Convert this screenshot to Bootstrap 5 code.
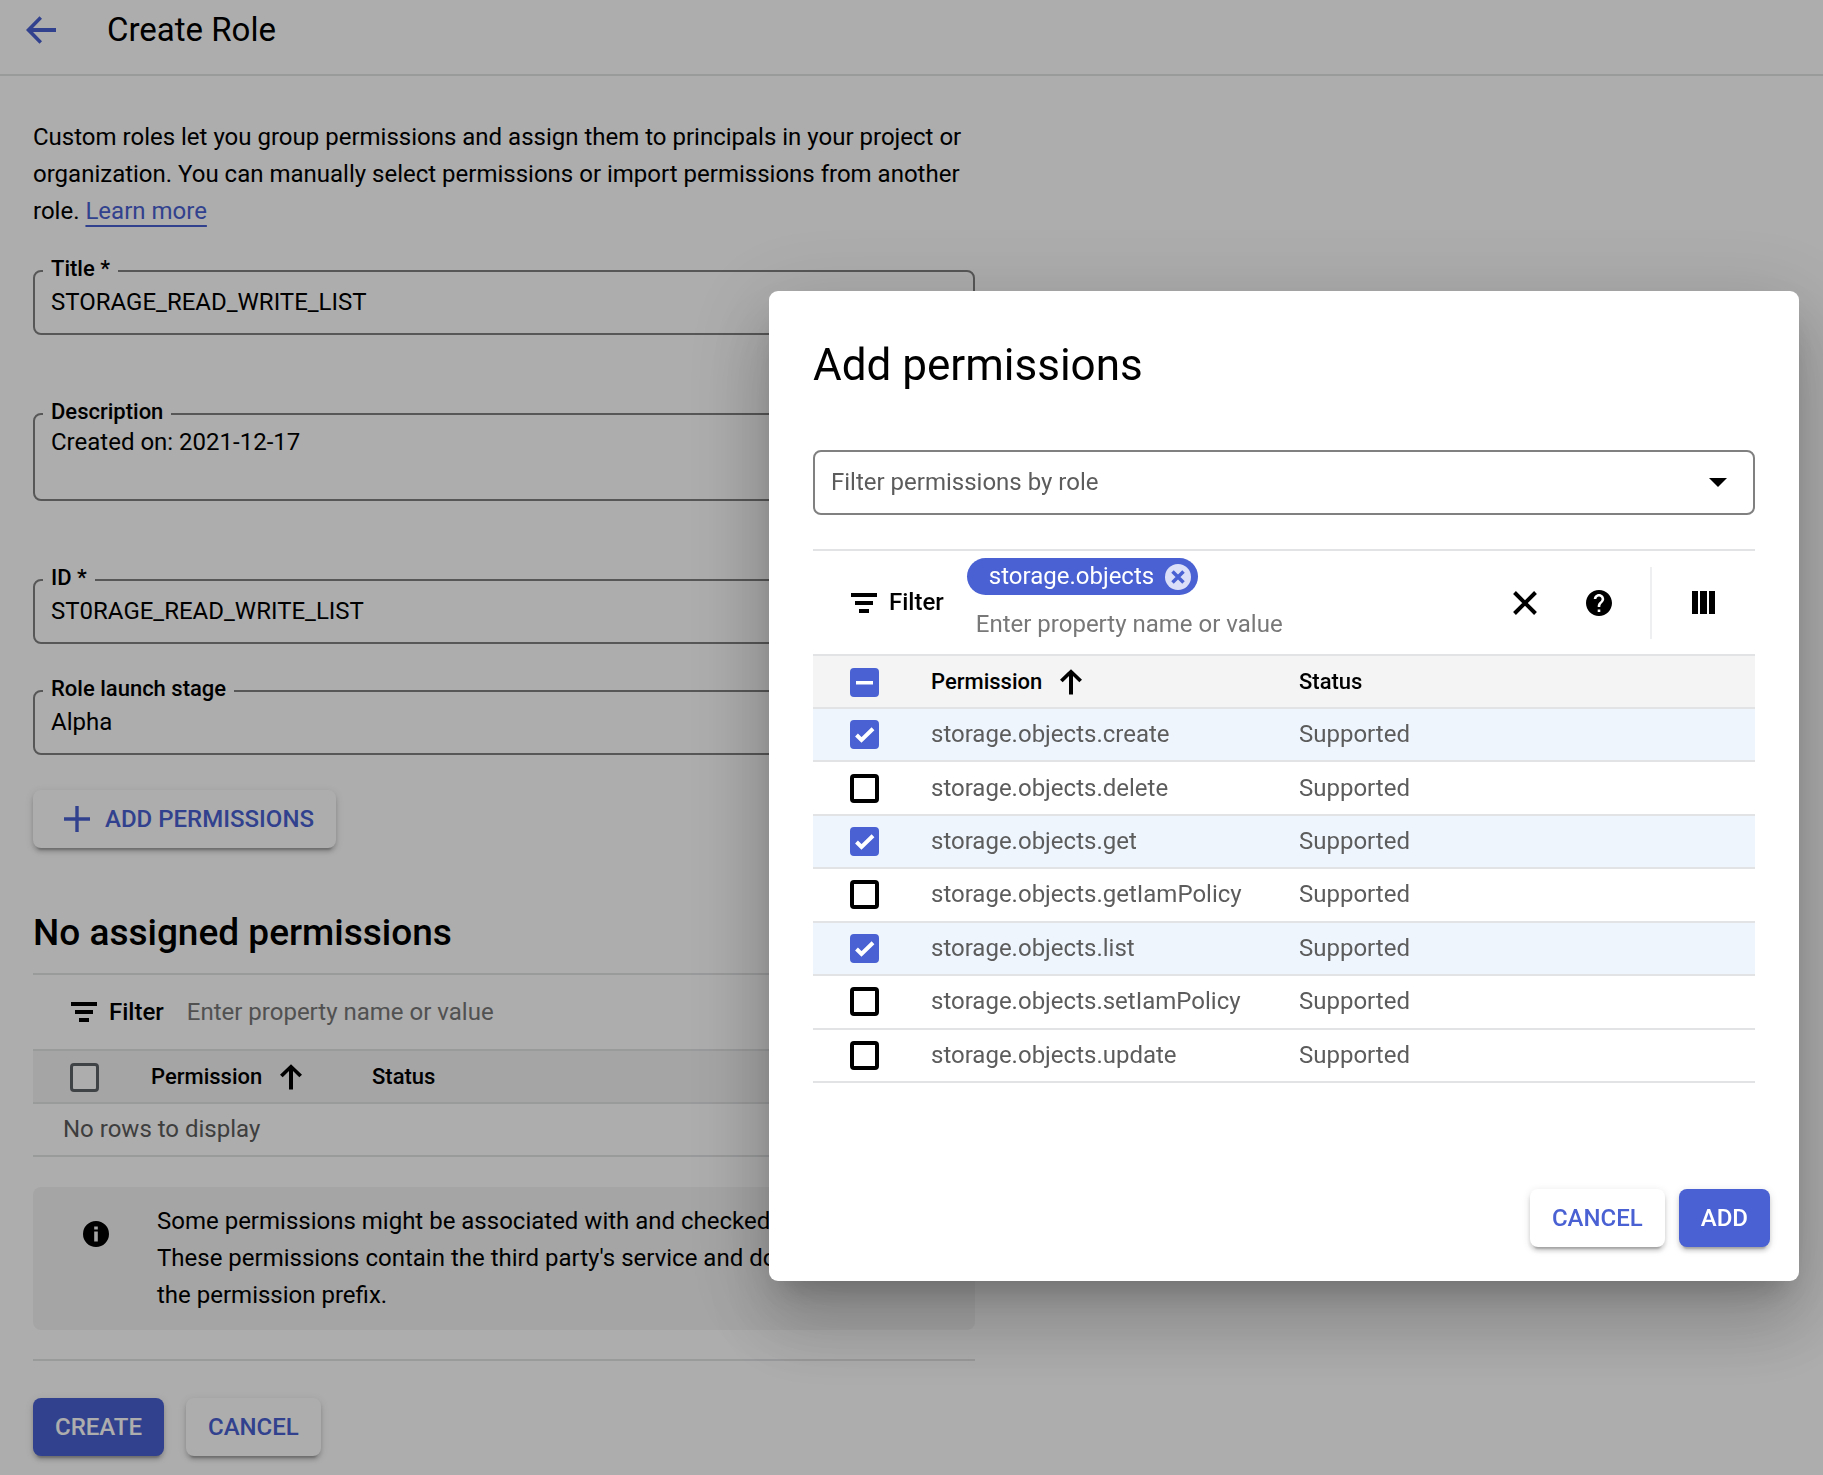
<!DOCTYPE html>
<html lang="en">
<head>
<meta charset="utf-8">
<meta name="viewport" content="width=device-width, initial-scale=1">
<title>Create Role</title>
<link href="https://cdn.jsdelivr.net/npm/bootstrap@5.3.0/dist/css/bootstrap.min.css" rel="stylesheet">
<style>
  :root { --accent: #4961d2; --line: #e2e3e4; --outline: #808080; --soft: #f4f4f4; --picked: #eef5fd; --dim: #5c5c5c; }
  body { font-family: Roboto, "Liberation Sans", sans-serif; font-size: 24px; line-height: 37px; color: #000; background: #fff; }
  svg { display: block; flex: none; fill: currentColor; }

  .page-head { height: 76px; padding: 0 24px 15px; border-bottom: 2px solid var(--line); }
  .page-head h1 { font-size: 33px; line-height: 40px; font-weight: 400; margin-left: 49px; }
  .back-link, .text-link { color: var(--accent); }
  .text-link { text-decoration: underline 2px; text-underline-offset: 6px; text-decoration-skip-ink: none; }
  .role-form { max-width: 1008px; padding: 43px 33px 18px; }

  .outlined { position: relative; }
  .outlined label { position: absolute; top: -20px; left: 10px; padding: 0 8px; background: #fff; font-size: 22px; font-weight: 500; }
  .outlined .form-control, .outlined .form-select { height: 65px; padding: 0 16px 1px; border: 2px solid var(--outline); border-radius: 8px; font-size: 24px; line-height: 37px; color: #000; background-color: transparent; }
  .outlined .form-select { background-image: url("data:image/svg+xml,%3Csvg xmlns='http://www.w3.org/2000/svg' viewBox='0 0 18 9'%3E%3Cpath d='M0 0h18L9 9z'/%3E%3C/svg%3E"); background-size: 18px 9px; background-position: right 26px center; }
  .outlined textarea.form-control { height: 88px; padding-top: 9px; resize: none; overflow: hidden; }
  .outlined .form-select.muted { color: var(--dim); }
  .gap-field { margin-bottom: 78px; }
  .gap-tight { margin-bottom: 46px; }
  .gap-last { margin-bottom: 35px; }

  .act { height: 58px; padding: 0 22px; border: 0; border-radius: 8px; font-size: 24px; font-weight: 500; line-height: 37px; color: var(--accent); background: #fff;
    box-shadow: 0 6px 2px -4px rgba(0,0,0,.2), 0 4px 4px rgba(0,0,0,.14), 0 2px 9px rgba(0,0,0,.12); }
  .act:hover, .act.solid { color: #fff; background: var(--accent); }
  .act.with-icon { padding-left: 28px; gap: 12px; }

  .section-title { font-size: 37px; line-height: 44px; font-weight: 500; margin: 63px 0 18px; }
  .filter-bar { border-top: 2px solid var(--line); height: 76px; padding-left: 38px; }
  .filter-bar label { font-weight: 500; }
  .filter-bar input { border: 0; padding: 0; outline: 0; width: 320px; background: transparent; height: 37px; }
  .filter-bar > input { margin-left: 23px; }
  .filter-bar input::placeholder { color: #787878; opacity: 1; }

  .perm-table { --bs-table-bg: transparent; --bs-table-color: var(--dim); margin: 0; table-layout: fixed; border-color: var(--line); }
  .perm-table > :not(caption) > * > * { padding: 0; height: 53px; border-bottom: 2px solid var(--line); vertical-align: middle; line-height: 37px; color: var(--dim); }
  .perm-table > thead > tr > th { background: var(--soft); border-top: 2px solid var(--line); color: #000; font-size: 22px; font-weight: 500; }
  .perm-table > tbody > tr.picked > td { background: var(--picked); }
  .perm-table .col-tick { width: 118px; }
  .perm-table .col-name { width: 368px; }
  .tick.form-check-input { display: block; float: none; width: 29px; height: 29px; margin: 0 0 0 37px; border: 4px solid #000; border-radius: 4px; }
  thead .tick.form-check-input { margin-top: 2px; }
  .tick[type=checkbox]:checked, .tick[type=checkbox]:indeterminate { background-color: var(--accent); border-color: var(--accent); background-size: 21px 21px; }
  .tick[type=checkbox]:checked { background-image: url("data:image/svg+xml,%3Csvg xmlns='http://www.w3.org/2000/svg' viewBox='0 0 21 21'%3E%3Cpath fill='none' stroke='%23fff' stroke-width='4' d='M2.500 11l5 5L19 4.800'/%3E%3C/svg%3E"); }
  .tick.form-check-input[type=checkbox]:indeterminate { background-color: var(--accent); border-color: var(--accent); background-image: url("data:image/svg+xml,%3Csvg xmlns='http://www.w3.org/2000/svg' viewBox='0 0 21 21'%3E%3Cpath fill='%23fff' d='M2 9h17v3.400H2z'/%3E%3C/svg%3E"); }
  .empty-table .col-name { width: 221px; }
  .empty-table .tick.form-check-input { border: 3px solid #5f6368; }
  .perm-table > tbody > tr > td.no-rows { padding-left: 30px; }

  .note { background: var(--soft); border-radius: 8px; padding: 16px 16px 16px 50px; margin: 30px 0 29px; }
  .note svg { margin-top: 18px; }
  .note p { margin: 0 0 0 48px; }
  .form-actions { border-top: 2px solid var(--line); padding-top: 37px; gap: 22px; }

  .shade { background: rgba(0,0,0,.32); opacity: 1; }
  .perm-dialog { max-width: 1030px; margin: 291px 24px 24px auto; }
  .perm-dialog .modal-content { border: 0; border-radius: 9px; padding: 0 44px; color: #000;
    box-shadow: 0 20px 28px -13px rgba(0,0,0,.2), 0 44px 70px 6px rgba(0,0,0,.14), 0 17px 85px 15px rgba(0,0,0,.12); }
  .perm-dialog .modal-title { font-size: 44px; line-height: 56px; font-weight: 400; margin: 46px 0 57px; }
  .perm-dialog .filter-bar { height: 105px; margin-top: 34px; padding: 0 40px 0 38px; }
  .chip { height: 37px; padding: 0 7px 0 22px; border-radius: 19px; background: var(--accent); color: #fff; }
  .chip button, .tool { border: 0; padding: 0; background: none; color: inherit; }
  .chip button { color: #dbe0f8; margin-left: 11px; }
  .chip-stack { margin-left: 23px; padding-top: 7px; }
  .chip-stack input { display: block; margin: 11px 0 0 9px; }
  .bar-rule { width: 2px; height: 72px; background: #eeeff0; margin: 0 40px 0 38px; }
  .dialog-table { height: 429px; }
  .perm-dialog .modal-footer { border: 0; padding: 0; margin: 106px -15px 34px 0; gap: 14px; }
  .perm-dialog .modal-footer > * { margin: 0; }
</style>
<script src="https://cdn.jsdelivr.net/npm/bootstrap@5.3.0/dist/js/bootstrap.bundle.min.js"></script>
</head>
<body>

<header class="page-head d-flex align-items-center">
  <a class="back-link" href="#" aria-label="Back"><svg width="34" height="30" viewBox="0 0 34 30"><path d="M32 13H9L18 3.700 15.500 1.200 2 15l13.500 13.800 2.500-2.500L9 17H32z"/></svg></a>
  <h1 class="mb-0">Create Role</h1>
</header>

<main class="role-form">
  <p class="mb-0 pb-1">Custom roles let you group permissions and assign them to principals in your project or organization. You can manually select permissions or import permissions from another role. <a class="text-link" href="#">Learn more</a></p>
  <form class="pt-4 mt-2">
    <div class="outlined gap-field mt-1">
      <label for="role-title">Title *</label>
      <input class="form-control" id="role-title" type="text" value="STORAGE_READ_WRITE_LIST">
    </div>
    <div class="outlined gap-field">
      <label for="role-desc">Description</label>
      <textarea class="form-control d-block" id="role-desc">Created on: 2021-12-17</textarea>
    </div>
    <div class="outlined gap-tight">
      <label for="role-id">ID *</label>
      <input class="form-control" id="role-id" type="text" value="ST0RAGE_READ_WRITE_LIST">
    </div>
    <div class="outlined gap-last">
      <label for="role-stage">Role launch stage</label>
      <select class="form-select" id="role-stage"><option>Alpha</option></select>
    </div>
    <button class="btn act with-icon d-flex align-items-center" type="button">
      <svg width="32" height="32" viewBox="0 0 32 32"><path d="M14.300 3h3.400v11.300H29v3.400H17.700V29h-3.400V17.700H3v-3.400h11.300z"/></svg>ADD PERMISSIONS
    </button>

    <h2 class="section-title">No assigned permissions</h2>
    <div class="filter-bar d-flex align-items-center">
      <svg width="26" height="20" viewBox="0 0 26 20"><path d="M0 0h26v4H0zM4 8h18v4H4zM8 16h10v4H8z"/></svg>
      <label class="ms-2 ps-1" for="page-filter">Filter</label>
      <input id="page-filter" type="text" placeholder="Enter property name or value">
    </div>
    <table class="table perm-table empty-table">
      <thead>
        <tr>
          <th class="col-tick"><input class="form-check-input tick" type="checkbox" aria-label="Select all assigned permissions"></th>
          <th class="col-name"><span class="d-flex align-items-center">Permission<svg class="ms-3" width="26" height="26" viewBox="0 0 26 26"><path d="M11 25.500V7L4.700 13.300 2 10.700 13 .2l11 10.500-2.700 2.600L15 7v18.500z"/></svg></span></th>
          <th>Status</th>
        </tr>
      </thead>
      <tbody><tr><td class="no-rows" colspan="3">No rows to display</td></tr></tbody>
    </table>

    <div class="note d-flex align-items-start">
      <svg width="26" height="26" viewBox="0 0 26 26"><path fill-rule="evenodd" d="M13 0a13 13 0 1 1 0 26 13 13 0 0 1 0-26zM11.200 5.500v3h3.600v-3zM11.200 10.500v10h3.600v-10z"/></svg>
      <p>Some permissions might be associated with and checked by third parties. These permissions contain the third party's service and domain name in the permission prefix.</p>
    </div>

    <div class="form-actions d-flex">
      <button class="btn act solid" type="submit">CREATE</button>
      <button class="btn act" type="button">CANCEL</button>
    </div>
  </form>
</main>

<div class="modal-backdrop shade"></div>
<div class="modal d-block" role="dialog" aria-modal="true" aria-labelledby="dialog-title">
  <div class="modal-dialog perm-dialog">
    <div class="modal-content">
      <h2 class="modal-title" id="dialog-title">Add permissions</h2>
      <div class="outlined">
        <select class="form-select muted" aria-label="Filter permissions by role"><option>Filter permissions by role</option></select>
      </div>

      <div class="filter-bar d-flex align-items-center">
        <svg width="26" height="20" viewBox="0 0 26 20"><path d="M0 0h26v4H0zM4 8h18v4H4zM8 16h10v4H8z"/></svg>
        <label class="ms-2 ps-1" for="dialog-filter">Filter</label>
        <div class="chip-stack align-self-start me-auto">
          <span class="chip d-inline-flex align-items-center">storage.objects<button type="button" aria-label="Remove storage.objects"><svg width="26" height="26" viewBox="0 0 26 26"><circle cx="13" cy="13" r="13"/><path fill="none" stroke="#4961d2" stroke-width="3.500" d="M7.500 7.500l11 11M18.500 7.500l-11 11"/></svg></button></span>
          <input id="dialog-filter" type="text" placeholder="Enter property name or value">
        </div>
        <button class="tool" type="button" aria-label="Clear filters"><svg width="26" height="26" viewBox="0 0 26 26"><path fill="none" stroke="#000" stroke-width="4" d="M2.500 2.500l21 21M23.500 2.500l-21 21"/></svg></button>
        <button class="tool ms-5" type="button" aria-label="Help"><svg width="26" height="26" viewBox="2 2 20 20"><path d="M12 2C6.480 2 2 6.480 2 12s4.480 10 10 10 10-4.480 10-10S17.520 2 12 2zm1 17h-2v-2h2v2zm2.070-7.750l-.9.920C13.450 12.900 13 13.500 13 15h-2v-.5c0-1.100.45-2.100 1.170-2.830l1.240-1.260c.37-.36.590-.860.590-1.410 0-1.100-.9-2-2-2s-2 .9-2 2H8c0-2.210 1.790-4 4-4s4 1.790 4 4c0 .88-.36 1.680-.93 2.250z"/></svg></button>
        <span class="bar-rule"></span>
        <button class="tool" type="button" aria-label="Columns"><svg width="23" height="23" viewBox="0 0 23 23"><path d="M0 0h6v23H0zM8 0h7v23H8zM17 0h6v23h-6z"/></svg></button>
      </div>

      <table class="table perm-table dialog-table">
        <thead>
          <tr>
            <th class="col-tick"><input class="form-check-input tick" id="all-ticks" type="checkbox" aria-label="Select all permissions"></th>
            <th class="col-name"><span class="d-flex align-items-center">Permission<svg class="ms-3" width="26" height="26" viewBox="0 0 26 26"><path d="M11 25.500V7L4.700 13.300 2 10.700 13 .2l11 10.500-2.700 2.600L15 7v18.500z"/></svg></span></th>
            <th>Status</th>
          </tr>
        </thead>
        <tbody>
          <tr class="picked"><td><input class="form-check-input tick" type="checkbox" id="p1" checked></td><td><label for="p1">storage.objects.create</label></td><td>Supported</td></tr>
          <tr><td><input class="form-check-input tick" type="checkbox" id="p2"></td><td><label for="p2">storage.objects.delete</label></td><td>Supported</td></tr>
          <tr class="picked"><td><input class="form-check-input tick" type="checkbox" id="p3" checked></td><td><label for="p3">storage.objects.get</label></td><td>Supported</td></tr>
          <tr><td><input class="form-check-input tick" type="checkbox" id="p4"></td><td><label for="p4">storage.objects.getIamPolicy</label></td><td>Supported</td></tr>
          <tr class="picked"><td><input class="form-check-input tick" type="checkbox" id="p5" checked></td><td><label for="p5">storage.objects.list</label></td><td>Supported</td></tr>
          <tr><td><input class="form-check-input tick" type="checkbox" id="p6"></td><td><label for="p6">storage.objects.setIamPolicy</label></td><td>Supported</td></tr>
          <tr><td><input class="form-check-input tick" type="checkbox" id="p7"></td><td><label for="p7">storage.objects.update</label></td><td>Supported</td></tr>
        </tbody>
      </table>

      <div class="modal-footer">
        <button class="btn act" type="button">CANCEL</button>
        <button class="btn act solid" type="button">ADD</button>
      </div>
    </div>
  </div>
</div>
<script>document.getElementById('all-ticks').indeterminate = true;</script>
</body>
</html>
